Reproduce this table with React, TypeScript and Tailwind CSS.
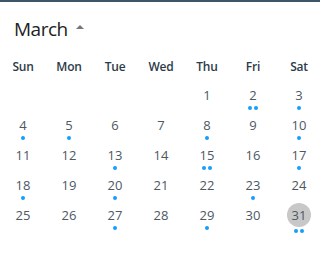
import React from 'react';

const days = ['Sun', 'Mon', 'Tue', 'Wed', 'Thu', 'Fri', 'Sat'];

// events per day of month
const events: Record<number, number> = {
  2: 2, 3: 1, 4: 1, 5: 1, 8: 1, 10: 1, 13: 1, 15: 2, 17: 1,
  18: 1, 20: 1, 23: 1, 27: 1, 29: 1, 31: 2,
};

const firstDay = 4; // March starts on Thursday
const selected = 31;

function DayCell({ day }: { day: number | null }) {
  if (day === null) return <div className="h-[30px]" />;
  const count = events[day] || 0;
  const isSelected = day === selected;
  return (
    <div className="h-[30px] flex flex-col items-center pt-[1px]">
      <div className="relative flex items-center justify-center h-[16px]">
        {isSelected && (
          <div className="absolute left-1/2 top-1/2 -translate-x-1/2 -translate-y-1/2 w-[24px] h-[24px] rounded-full bg-[#c8c8c8]" />
        )}
        <span className="relative text-[13px] leading-[16px] text-[#4d5863]">{day}</span>
      </div>
      <div className={`flex gap-[2px] h-[4px] ${isSelected ? 'mt-[6px]' : 'mt-[3px]'}`}>
        {Array.from({ length: count }).map((_, i) => (
          <span key={i} className="w-[4px] h-[4px] rounded-full bg-[#12a0fb]" />
        ))}
      </div>
    </div>
  );
}

export default function App() {
  const cells: (number | null)[] = [];
  for (let i = 0; i < firstDay; i++) cells.push(null);
  for (let d = 1; d <= 31; d++) cells.push(d);

  return (
    <div
      className="w-[320px] h-[262px] bg-white border-t-[2px] border-[#3e5568] overflow-hidden"
      style={{ fontFamily: '"Open Sans", "Noto Sans", sans-serif' }}
    >
      <div className="flex items-center pl-[14px] pt-[10px] h-[43px]">
        <span className="text-[19px] leading-[26px] tracking-[-0.5px] text-[#222]">March</span>
        <svg className="ml-[8px] mb-[4px]" width="8" height="4" viewBox="0 0 8 4">
          <path d="M0 4 L4 0 L8 4 Z" fill="#777" />
        </svg>
      </div>
      <div className="grid grid-cols-[repeat(7,46px)] mt-[14px]">
        {days.map((d) => (
          <div key={d} className="text-center text-[12px] leading-[16px] font-semibold tracking-[-0.2px] text-[#2d3b48]">
            {d}
          </div>
        ))}
      </div>
      <div className="grid grid-cols-[repeat(7,46px)] mt-[11px]">
        {cells.map((d, i) => (
          <DayCell key={i} day={d} />
        ))}
      </div>
    </div>
  );
}
